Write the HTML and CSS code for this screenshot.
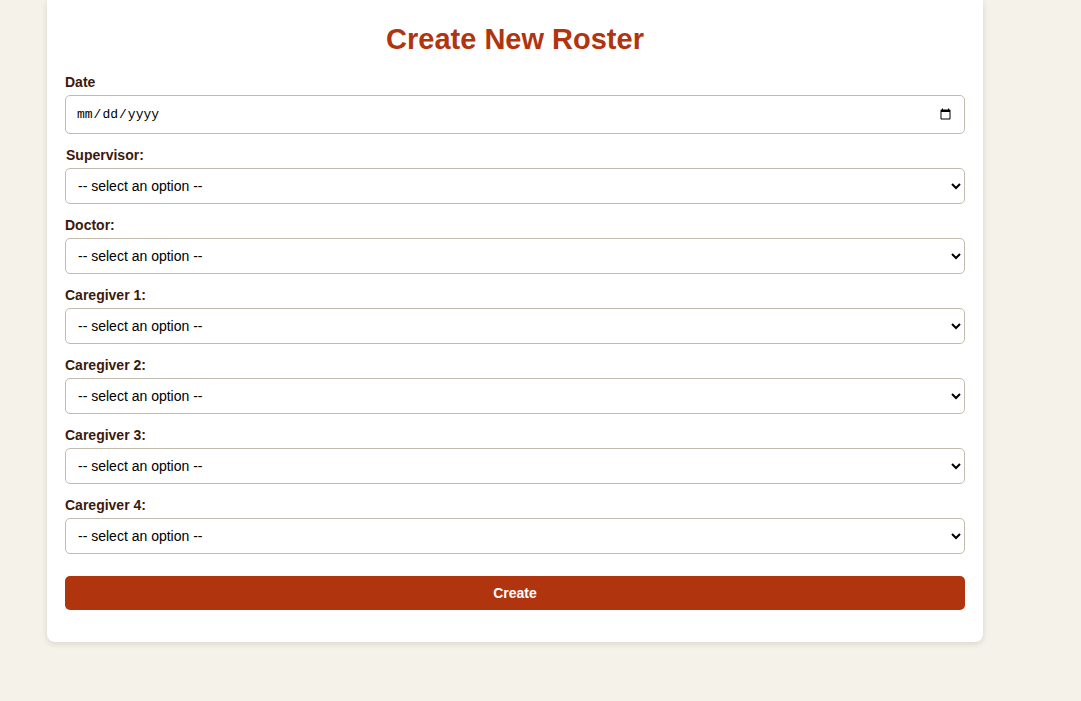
FILE: index.html
```html
<!DOCTYPE html>
<html>
<head>
<meta charset="utf-8">
<link rel="stylesheet" href="styles.css">
</head>
<body>
<div class="card">
  <h1 class="title">Create New Roster</h1>
  <form class="form">
    <div class="group">
      <label class="label">Date</label>
      <input class="input date" type="date">
    </div>
    <div class="group">
      <label class="label indent">Supervisor:</label>
      <select class="input select"><option>-- select an option --</option></select>
    </div>
    <div class="group">
      <label class="label">Doctor:</label>
      <select class="input select"><option>-- select an option --</option></select>
    </div>
    <div class="group">
      <label class="label">Caregiver 1:</label>
      <select class="input select"><option>-- select an option --</option></select>
    </div>
    <div class="group">
      <label class="label">Caregiver 2:</label>
      <select class="input select"><option>-- select an option --</option></select>
    </div>
    <div class="group">
      <label class="label">Caregiver 3:</label>
      <select class="input select"><option>-- select an option --</option></select>
    </div>
    <div class="group">
      <label class="label">Caregiver 4:</label>
      <select class="input select"><option>-- select an option --</option></select>
    </div>
    <button class="btn" type="button">Create</button>
  </form>
</div>
</body>
</html>
```
FILE: styles.css
```css
html, body {
  margin: 0;
  padding: 0;
}
body {
  background: #f5f2ea;
  font-family: "Liberation Sans", Arial, sans-serif;
  height: 701px;
  overflow: hidden;
}
.card {
  margin-left: 47px;
  width: 936px;
  box-sizing: border-box;
  background: #ffffff;
  border-radius: 0 0 8px 8px;
  box-shadow: 0 2px 6px rgba(0, 0, 0, 0.12);
  padding: 23px 18px 32px 18px;
}
.title {
  margin: 0 0 20px 0;
  text-align: center;
  font-size: 29px;
  line-height: 32px;
  font-weight: bold;
  color: #b0350f;
}
.form {
  display: flex;
  flex-direction: column;
}
.group {
  display: flex;
  flex-direction: column;
  margin-bottom: 14px;
}
.group:last-of-type {
  margin-bottom: 22px;
}
.label {
  display: block;
  font-size: 14px;
  line-height: 15px;
  font-weight: bold;
  color: #3b1a0c;
  margin-bottom: 5px;
}
.indent {
  padding-left: 1px;
}
.input {
  width: 100%;
  box-sizing: border-box;
  border: 1px solid #c2bcae;
  border-radius: 5px;
  background: #ffffff;
  color: #000;
}
.date {
  height: 39px;
  padding: 0 10px;
  font-family: "Liberation Mono", monospace;
  font-size: 13px;
}
.select {
  height: 36px;
  padding: 0 8px;
  font-family: "Liberation Sans", Arial, sans-serif;
  font-size: 14px;
}
.btn {
  width: 100%;
  height: 34px;
  border: none;
  border-radius: 5px;
  background: #b0350f;
  color: #ffffff;
  font-family: "Liberation Sans", Arial, sans-serif;
  font-weight: bold;
  font-size: 14px;
  cursor: pointer;
}
```
